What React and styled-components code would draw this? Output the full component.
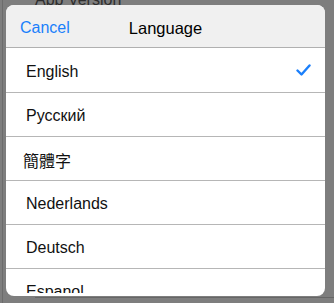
import styled, { createGlobalStyle } from "styled-components";

const GlobalStyle = createGlobalStyle`
  html, body {
    margin: 0;
    padding: 0;
    background: #7e7e7e;
    font-family: "Liberation Sans", Arial, sans-serif;
  }
`;

const languages = [
  { id: "en", label: "English", selected: true },
  { id: "ru", label: "Русский" },
  { id: "zh", label: "簡體字", cjk: true },
  { id: "nl", label: "Nederlands" },
  { id: "de", label: "Deutsch" },
  { id: "es", label: "Espanol" },
];

export default function App() {
  return (
    <>
      <GlobalStyle />
      <Screen>
        {/* the dimmed settings page behind the popup */}
        <Backdrop>
          <BackRow>App Version</BackRow>
          <BackSeparator />
        </Backdrop>

        <Popup>
          <Header>
            <CancelButton>Cancel</CancelButton>
            <Title>Language</Title>
          </Header>
          <List>
            {languages.map((lang) => (
              <Row key={lang.id}>
                <RowLabel $cjk={lang.cjk}>{lang.label}</RowLabel>
                {lang.selected && (
                  <svg width="15" height="12" viewBox="0 0 15 12">
                    <polyline
                      points="1.5,6.5 5.5,10.5 13.5,1.5"
                      fill="none"
                      stroke="#1a7ffb"
                      strokeWidth="2.4"
                      strokeLinecap="round"
                      strokeLinejoin="round"
                    />
                  </svg>
                )}
              </Row>
            ))}
          </List>
        </Popup>
      </Screen>
    </>
  );
}

const Screen = styled.div`
  position: relative;
  width: 334px;
  height: 303px;
  overflow: hidden;
  background: #7e7e7e;
`;

const Backdrop = styled.div`
  height: 100%;
  margin-left: 2px;
  border-left: 1px solid #6c6c6c;
  box-sizing: border-box;
  display: flex;
  flex-direction: column;
  justify-content: space-between;
`;

const BackRow = styled.div`
  margin-top: -9px;
  padding-left: 32px;
  font-size: 16px;
  color: #2e2e2e;
`;

const BackSeparator = styled.div`
  margin: 0 0 5px 32px;
  height: 1px;
  background: #666;
`;

const Popup = styled.div`
  position: absolute;
  left: 6px;
  top: 5px;
  width: 319px;
  height: 291px;
  padding-bottom: 3px;
  box-sizing: border-box;
  border-radius: 8px;
  overflow: hidden;
  background: #ffffff;
  display: flex;
  flex-direction: column;
`;

const Header = styled.div`
  position: relative;
  height: 42px;
  flex-shrink: 0;
  display: flex;
  align-items: center;
  justify-content: center;
  background: #f0f0f0;
  border-bottom: 1px solid #b0b0b0;
`;

const CancelButton = styled.span`
  position: absolute;
  left: 14px;
  top: 14px;
  font-size: 16px;
  color: #1a7ffb;
`;

const Title = styled.span`
  font-size: 16.5px;
  color: #000;
  margin-top: 5px;
`;

const List = styled.div`
  flex: 1;
  min-height: 0;
  overflow: hidden;
  padding-top: 1px;
  display: flex;
  flex-direction: column;
`;

const Row = styled.div`
  height: 43px;
  flex-shrink: 0;
  display: flex;
  align-items: center;
  justify-content: space-between;
  padding: 2px 14px 0 20px;
  box-sizing: content-box;
  height: 41px;
  border-bottom: 1px solid #b6b6b6;

  svg {
    margin-top: -3px;
  }
`;

const RowLabel = styled.span`
  font-size: 16px;
  color: #111;
  margin-left: ${(p) => (p.$cjk ? "-3px" : "0")};
  font-family: ${(p) =>
    p.$cjk
      ? '"Noto Sans CJK TC", "Noto Sans CJK SC", sans-serif'
      : '"Liberation Sans", Arial, sans-serif'};
`;
